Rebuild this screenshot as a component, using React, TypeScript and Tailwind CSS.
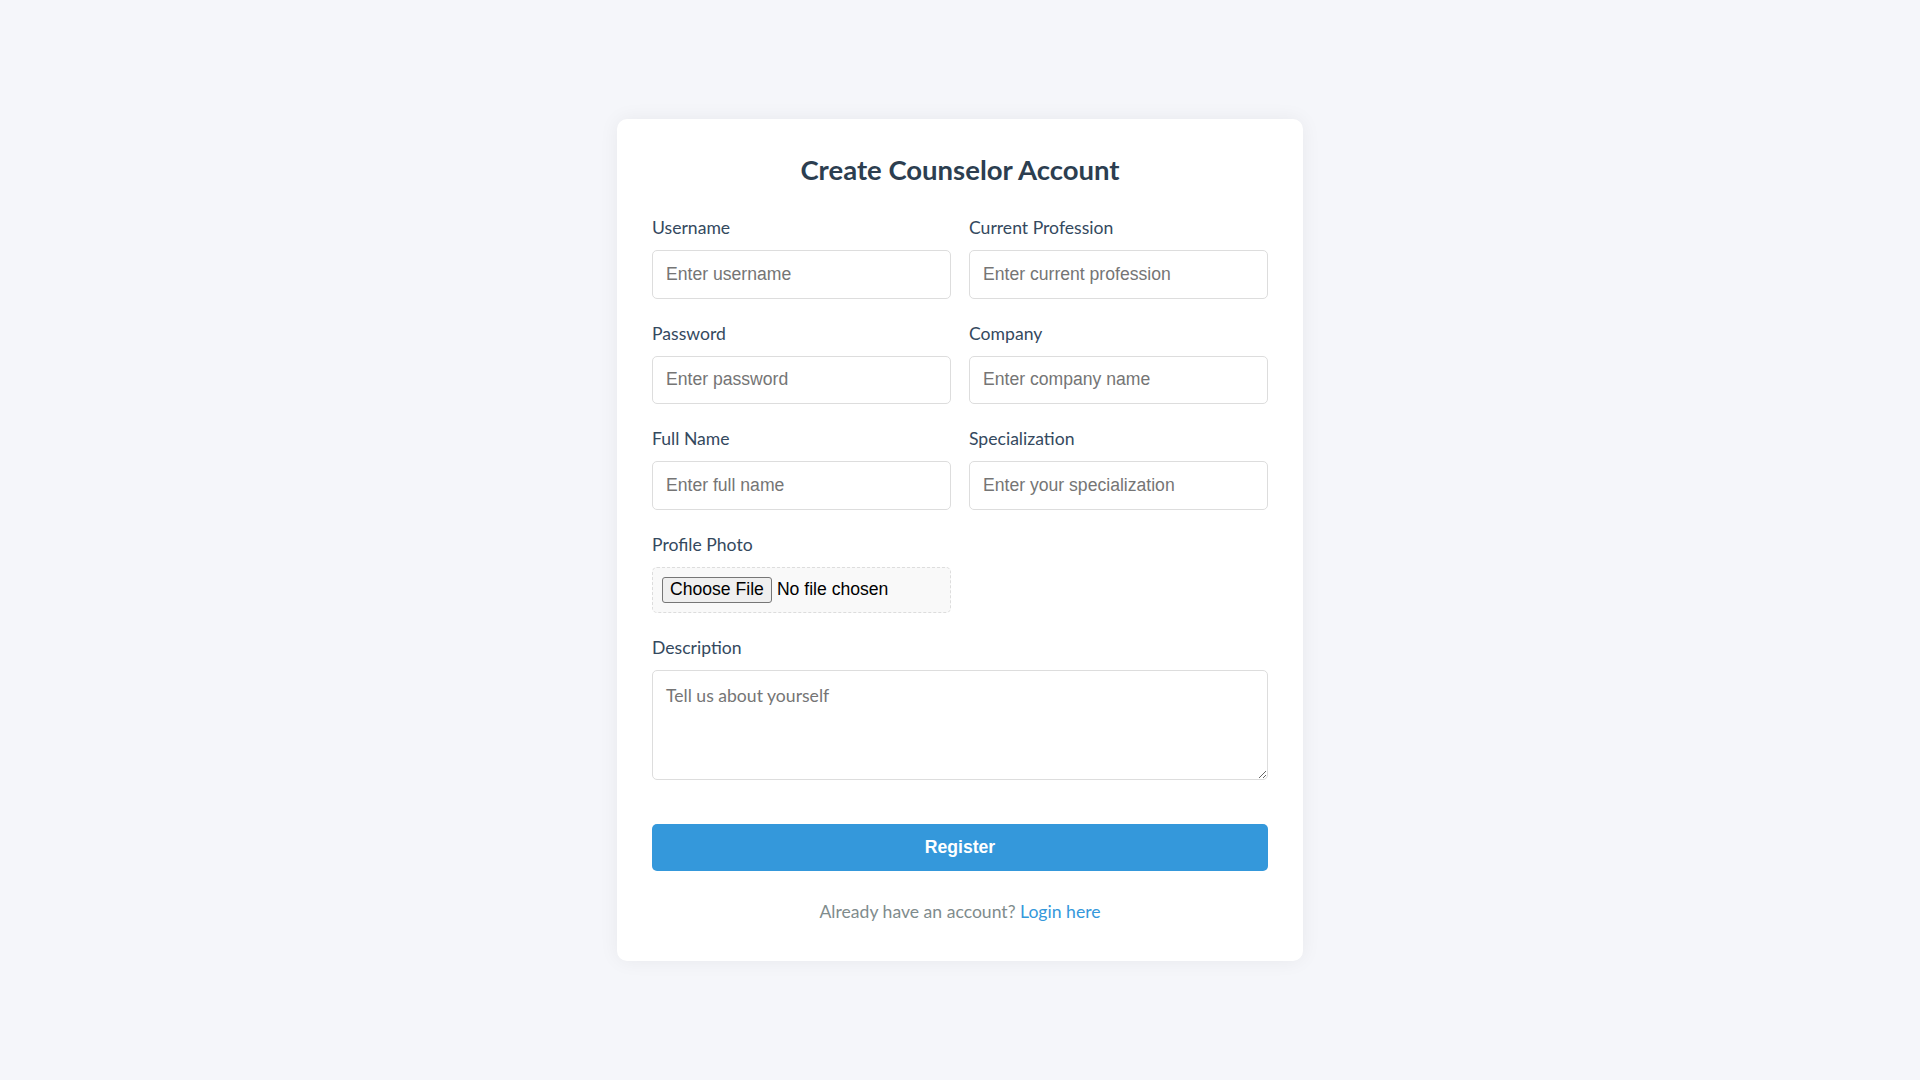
import React from "react";

const Field = ({ label, placeholder, type = "text" }: { label: string; placeholder: string; type?: string }) => (
  <div className="flex flex-col">
    <label className="block pt-[1px] text-[17.6px] leading-[26px] text-[#34495e] mb-[9px]">{label}</label>
    <input
      type={type}
      placeholder={placeholder}
      className="h-[48.5px] w-full rounded-[5px] border border-[#dddddd] bg-white px-[13px] text-[17.6px] text-[#333] placeholder:text-[#757575] outline-none"
      style={{ fontFamily: '"Liberation Sans", Arial, sans-serif' }}
    />
  </div>
);

export default function App() {
  return (
    <div
      className="min-h-screen w-full bg-[#f5f6fa] flex items-center justify-center"
      style={{ fontFamily: 'Lato, "Noto Sans", sans-serif' }}
    >
      <div className="w-[686px] bg-white rounded-[10px] shadow-[0_0_20px_rgba(0,0,0,0.06)] px-[35px] pt-[35px] pb-[36px]">
        <h2 className="text-center text-[27.5px] leading-[32px] font-bold text-[#2c3e50] mb-[28px]">
          Create Counselor Account
        </h2>
        <form className="flex flex-col" onSubmit={(e) => e.preventDefault()}>
          <div className="grid grid-cols-2 gap-x-[18px] gap-y-[21px]">
            <Field label="Username" placeholder="Enter username" />
            <Field label="Current Profession" placeholder="Enter current profession" />
            <Field label="Password" placeholder="Enter password" type="password" />
            <Field label="Company" placeholder="Enter company name" />
            <Field label="Full Name" placeholder="Enter full name" />
            <Field label="Specialization" placeholder="Enter your specialization" />
            <div className="flex flex-col">
              <label className="block pt-[1px] text-[17.6px] leading-[26px] text-[#34495e] mb-[9px]">Profile Photo</label>
              <div
                className="h-[46.7px] flex items-center rounded-[5px] border border-dashed border-[#dddddd] bg-[#f9f9f9] px-[9px] text-[17.6px] text-black"
                style={{ fontFamily: '"Liberation Sans", Arial, sans-serif' }}
              >
                <span className="h-[26px] flex items-center rounded-[3px] border border-[#767676] bg-[#efefef] px-[7px] leading-none">
                  Choose File
                </span>
                <span className="ml-[5px] leading-none">No file chosen</span>
              </div>
            </div>
            <div />
          </div>
          <div className="flex flex-col mt-[21px]">
            <label className="block pt-[1px] text-[17.6px] leading-[26px] text-[#34495e] mb-[9px]">Description</label>
            <textarea
              placeholder="Tell us about yourself"
              className="h-[109.5px] w-full rounded-[5px] border border-[#dddddd] bg-white px-[13px] pt-[13px] pb-[11px] text-[17.6px] leading-[24px] text-[#333] placeholder:text-[#757575] outline-none"
            />
          </div>
          <button
            type="submit"
            className="mt-[44.5px] h-[46.7px] w-full rounded-[5px] bg-[#3498db] text-white text-[17.6px] font-bold"
            style={{ fontFamily: '"Liberation Sans", Arial, sans-serif' }}
          >
            Register
          </button>
          <p className="mt-[27px] pt-[1px] text-center text-[17.6px] leading-[26px] text-[#7f8c8d]">
            Already have an account? <a href="#" className="text-[#3498db]">Login here</a>
          </p>
        </form>
      </div>
    </div>
  );
}
